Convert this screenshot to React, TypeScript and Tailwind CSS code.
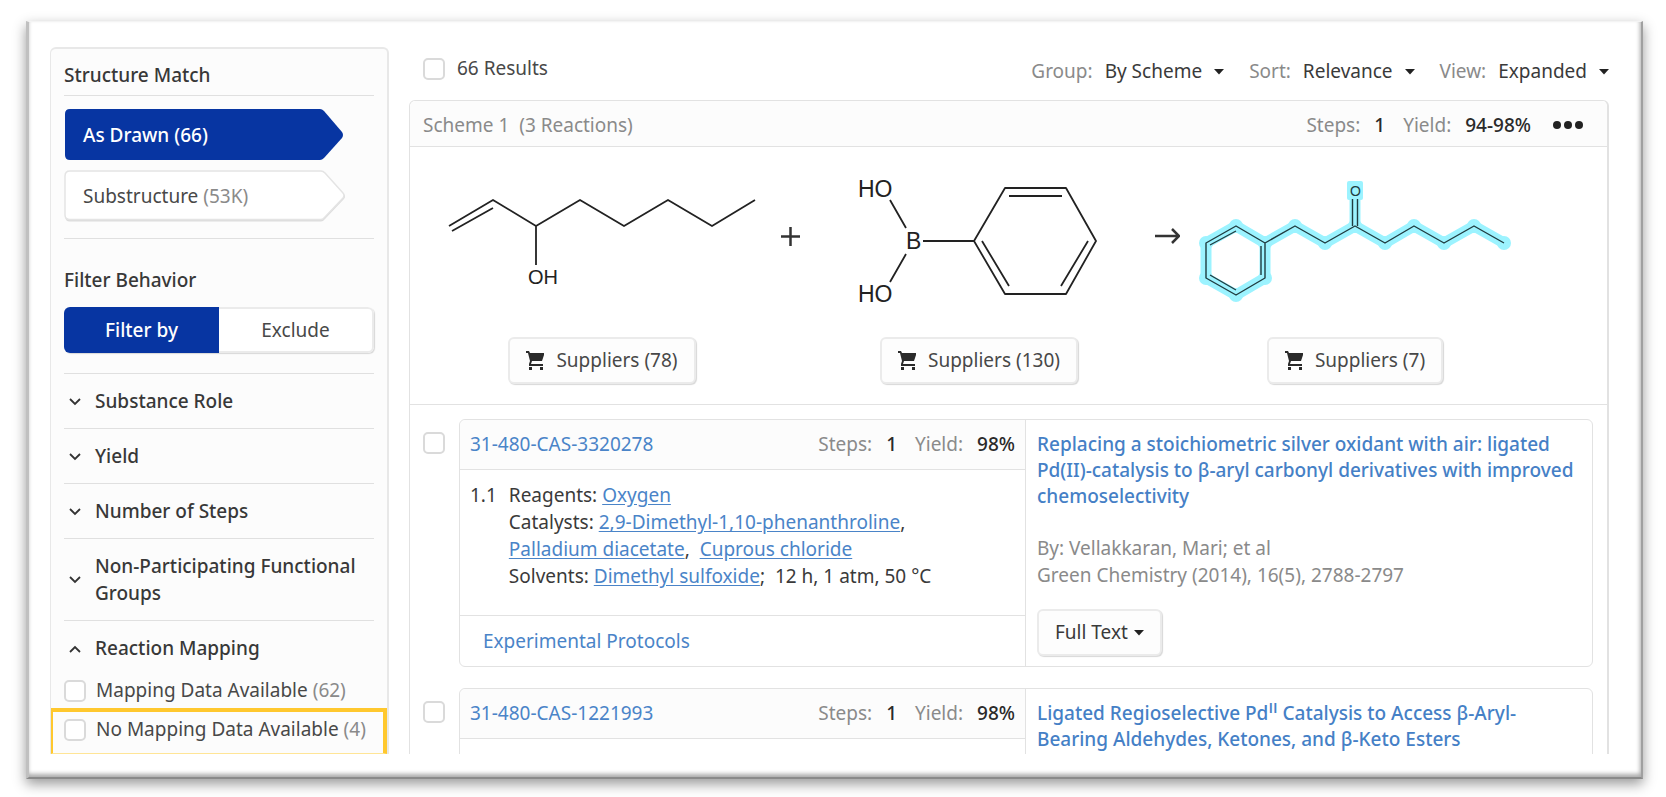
import { useState } from 'react'
import type { ReactNode } from 'react'

const cartPath =
  'M0 0h3l1 2h14v2l-2 6H6l-1 3h12v2H3v-2l1-3L2 2H0zM3 16h3v3H3zM14 16h3v3h-3z'

function Caret() {
  return (
    <svg width="10" height="6" viewBox="0 0 10 6" className="pointer-events-none shrink-0" aria-hidden="true">
      <path d="M0 0h10L5 5.5z" fill="#222" />
    </svg>
  )
}

function CheckBox({ id, label }: { id: string; label?: string }) {
  return (
    <input
      id={id}
      type="checkbox"
      aria-label={label}
      className="size-[22px] shrink-0 appearance-none rounded-[5px] border-2 border-[#dadada] bg-white checked:bg-[#0735a2]"
    />
  )
}

interface TagButtonProps {
  active: boolean
  label: string
  count: string
  onClick: () => void
}

// Button shaped like a tag with its point to the right
function TagButton({ active, label, count, onClick }: TagButtonProps) {
  return (
    <button type="button" onClick={onClick} className="relative flex h-[52px] w-[282px] items-center pl-[19px]">
      <svg width="282" height="52" viewBox="0 0 282 52" className="absolute inset-0" aria-hidden="true">
        {active ? (
          <path d="M6 0H256Q258 0 260 2L278 23Q280 26 278 29L260 49Q258 51 256 51H6Q1 51 1 46V5Q1 0 6 0Z" fill="#0735a2" />
        ) : (
          <>
            <path d="M6 2H257Q259 2 261 4L280 24Q282 26.500 280 29L261 49Q259 51.500 257 51.500H6Q1 51.500 1 46V7Q1 2 6 2Z" fill="#dcdcdc" />
            <path d="M6 1H257Q259 1 261 3L279 23Q281 25.500 279 28L261 47Q259 49.500 257 49.500H6Q1 49.500 1 45V6Q1 1 6 1Z" fill="#fff" stroke="#e4e4e4" strokeWidth="1.500" />
          </>
        )}
      </svg>
      <span className={active ? 'relative font-medium text-white' : 'relative text-[#484848]'}>
        {label} <span className={active ? 'text-white' : 'text-[#8a8a8a]'}>({count})</span>
      </span>
    </button>
  )
}

function Chevron({ up }: { up?: boolean }) {
  return (
    <svg width="12" height="12" viewBox="0 0 12 12" fill="none" stroke="#333" strokeWidth="1.800" className="shrink-0" aria-hidden="true">
      <path d={up ? 'M1 9l5-5 5 5' : 'M1 3l5 5 5-5'} />
    </svg>
  )
}

function Dropdown({ id, label, options }: { id: string; label: string; options: string[] }) {
  return (
    <div className="flex items-center gap-3">
      <label htmlFor={id} className="text-[#8a8a8a]">{label}:</label>
      <div className="relative flex items-center">
        <select id={id} className="field-sizing-content appearance-none bg-transparent pr-[22px] text-[#3a3a3a]">
          {options.map((option) => (
            <option key={option}>{option}</option>
          ))}
        </select>
        <span className="pointer-events-none absolute right-0">
          <Caret />
        </span>
      </div>
    </div>
  )
}

function Stats({ steps, yieldValue }: { steps: string; yieldValue: string }) {
  return (
    <dl className="flex items-center">
      <dt className="mr-[14px] text-[#8a8a8a]">Steps:</dt>
      <dd className="mr-[18px] font-medium text-[#2a2a2a]">{steps}</dd>
      <dt className="mr-[14px] text-[#8a8a8a]">Yield:</dt>
      <dd className="font-medium text-[#2a2a2a]">{yieldValue}</dd>
    </dl>
  )
}

function Suppliers({ count }: { count: number }) {
  return (
    <button
      type="button"
      className="flex h-[47px] items-center gap-[12px] rounded-[6px] border-2 border-[#ebebeb] bg-[#fdfdfd] px-[16px] text-[#484848] shadow-[1px_1px_1px_#d8d8d8]"
    >
      <svg width="18" height="19" viewBox="0 0 18 19" fill="#2a2a2a" aria-hidden="true">
        <path d={cartPath} />
      </svg>
      Suppliers ({count})
    </button>
  )
}

function Molecule({ children, label }: { children: ReactNode; label: string }) {
  return (
    <svg
      width="358"
      height="160"
      viewBox="0 0 358 160"
      fill="none"
      stroke="#222"
      strokeWidth="1.800"
      strokeLinejoin="round"
      className="font-['Liberation_Sans']"
      role="img"
      aria-label={label}
    >
      {children}
    </svg>
  )
}

function Octenol() {
  return (
    <Molecule label="1-Octen-3-ol">
      <path d="M26 59L70 33L113 59L157 33L201 59L245 33L289 59L332 33M29 64L70 41M113 59V98" />
      <text x="105" y="117" fontSize="20" fill="#222" stroke="none">OH</text>
    </Molecule>
  )
}

function BoronicAcid() {
  return (
    <Molecule label="Phenylboronic acid">
      <path d="M174 74L205 21H266L296 74L266 127H205ZM209 29H262M182 74L209 119M288 74L261 119M123 74H174M90 33L106 61M90 115L106 87" />
      <g fontSize="23" fill="#222" stroke="none">
        <text x="58" y="30">HO</text>
        <text x="106" y="82">B</text>
        <text x="58" y="135">HO</text>
      </g>
    </Molecule>
  )
}

const productAtoms = [
  [60, 59], [30, 76], [30, 111], [60, 128], [89, 111], [89, 76], [119, 59],
  [149, 76], [179, 59], [209, 76], [238, 59], [268, 76], [298, 59], [328, 76],
]

const productBonds =
  'M60 59L30 76V111L60 128L89 111V76ZM89 76L119 59L149 76L179 59L209 76L238 59L268 76L298 59L328 76'

function Ketone() {
  return (
    <Molecule label="1-Phenyl-3-octanone">
      <path d={productBonds} stroke="#9cf3ff" strokeWidth="11" />
      <path d="M179 59V25" stroke="#9cf3ff" strokeWidth="11" />
      <g fill="#9cf3ff" stroke="none">
        {productAtoms.map(([cx, cy]) => (
          <circle key={`${cx}-${cy}`} cx={cx} cy={cy} r="7" />
        ))}
        <rect x="171" y="14" width="16" height="19" rx="2" />
      </g>
      <g strokeWidth="1.400" stroke="#203c40">
        <path d={productBonds} />
        <path d="M34 78L60 64M34 108L60 123M85 79V108M176.500 59V32M181.500 59V32" />
      </g>
      <text x="174" y="29" fontSize="14" fill="#203c40" stroke="none">O</text>
    </Molecule>
  )
}

const filters = ['Substance Role', 'Yield', 'Number of Steps', 'Non-Participating Functional Groups']

function Sidebar() {
  const [match, setMatch] = useState('drawn')
  const [behavior, setBehavior] = useState('filter')

  return (
    <aside className="w-[339px] shrink-0 overflow-hidden rounded-t-[6px] border-t-2 border-r-2 border-l border-[#e8e8e8] bg-[#fcfcfc]">
      <div className="px-[13px]">
        <h2 className="border-b border-[#e0e0e0] pt-[13px] pb-[6px] font-medium text-[#383838]">Structure Match</h2>
        <div className="flex flex-col gap-[9px] border-b border-[#e0e0e0] pt-[13px] pb-[16px]">
          <TagButton active={match === 'drawn'} label="As Drawn" count="66" onClick={() => setMatch('drawn')} />
          <TagButton active={match === 'sub'} label="Substructure" count="53K" onClick={() => setMatch('sub')} />
        </div>
        <h2 className="pt-[28px] font-medium text-[#383838]">Filter Behavior</h2>
        <div className="mt-[13px] grid h-[46px] grid-cols-2 overflow-hidden rounded-[6px] shadow-[1px_1px_1px_#d8d8d8]">
          <button
            type="button"
            onClick={() => setBehavior('filter')}
            className={behavior === 'filter' ? 'bg-[#0735a2] font-medium text-white' : 'border-2 border-[#ebebeb] bg-white text-[#484848]'}
          >
            Filter by
          </button>
          <button
            type="button"
            onClick={() => setBehavior('exclude')}
            className={behavior === 'exclude' ? 'bg-[#0735a2] font-medium text-white' : 'rounded-r-[6px] border-2 border-l-0 border-[#ebebeb] bg-white text-[#484848]'}
          >
            Exclude
          </button>
        </div>
        <div className="mt-[20px]">
          {filters.map((name) => (
            <button
              key={name}
              type="button"
              className="flex w-full items-center gap-[14px] border-t border-[#e0e0e0] pt-[14px] pb-[13px] pl-[5px] text-left font-medium text-[#383838]"
            >
              <Chevron />
              {name}
            </button>
          ))}
          <button
            type="button"
            className="flex w-full items-center gap-[14px] border-t border-[#e0e0e0] pt-[14px] pb-[11px] pl-[5px] text-left font-medium text-[#383838]"
          >
            <Chevron up />
            Reaction Mapping
          </button>
        </div>
      </div>
      <div className="flex h-[35px] items-center gap-[10px] px-[13px] text-[#484848]">
        <CheckBox id="mapped" />
        <label htmlFor="mapped">
          Mapping Data Available <span className="text-[#8a8a8a]">(62)</span>
        </label>
      </div>
      <div className="flex h-[46px] items-center gap-[10px] border-t-4 border-r-4 border-b border-l-2 border-[#ffc82e] border-b-[#ffe596] pb-[6px] pl-[11px] text-[#484848]">
        <CheckBox id="unmapped" />
        <label htmlFor="unmapped">
          No Mapping Data Available <span className="text-[#8a8a8a]">(4)</span>
        </label>
      </div>
    </aside>
  )
}

function Substance({ children }: { children: ReactNode }) {
  return <a href="#substance" className="text-[#4a84c8] underline underline-offset-2">{children}</a>
}

interface ReactionProps {
  id: string
  title: ReactNode
  source?: string[]
  children?: ReactNode
}

function Reaction({ id, title, source, children }: ReactionProps) {
  return (
    <div className="flex gap-[14px] pr-[14px] pl-[13px]">
      <div className="pt-[13px]">
        <CheckBox id={id} label={`Select ${id}`} />
      </div>
      <article className="grid min-h-[248px] flex-1 grid-cols-2 rounded-[6px] border border-[#e2e2e2]">
        <div className="flex flex-col border-r border-[#e2e2e2]">
          <div className="flex h-[50px] items-center justify-between rounded-tl-[6px] border-b border-[#e2e2e2] bg-[#fcfcfc] px-[10px]">
            <a href="#reaction" className="text-[#4a84c8]">{id}</a>
            <Stats steps="1" yieldValue="98%" />
          </div>
          {children}
        </div>
        <div className="flex flex-col items-start px-[11px] pt-[11px]">
          <h3 className="leading-[26px] font-medium">
            <a href="#reference" className="text-[#4580c6]">{title}</a>
          </h3>
          {source && (
            <>
              <p className="mt-[26px] text-[#8a8a8a]">
                {source[0]}
                <br />
                {source[1]}
              </p>
              <button
                type="button"
                className="mt-[20px] flex h-[47px] items-center gap-[6px] rounded-[6px] border-2 border-[#ebebeb] bg-[#fdfdfd] px-[16px] text-[#3a3a3a] shadow-[1px_1px_1px_#d8d8d8]"
              >
                Full Text <Caret />
              </button>
            </>
          )}
        </div>
      </article>
    </div>
  )
}

export default function App() {
  return (
    <div className="h-screen overflow-hidden bg-white pt-[21px] pr-[23px] pb-[18px] pl-[26px] font-['Noto_Sans',sans-serif] text-[19px] leading-[27px]">
      <div className="h-full border-t border-r-2 border-b-2 border-l-3 border-t-[#f4f4f4] border-r-[#a0a0a0] border-b-[#8a8a8a] border-l-[#c0c0c0] pt-[25px] pr-[22px] pb-[23px] pl-[21px] shadow-[0_5px_12px_#999,inset_-1px_-3px_4px_#aaa]">
        <div className="flex h-full gap-[20px] overflow-hidden">
          <Sidebar />
          <main className="flex min-w-0 flex-1 flex-col pr-[10px]">
            <div className="flex h-[53px] shrink-0 items-start justify-between pl-[14px]">
              <div className="flex items-center gap-[12px] pt-[8px] text-[#484848]">
                <CheckBox id="all" />
                <label htmlFor="all">66 Results</label>
              </div>
              <div className="flex gap-[25px] pt-[11px]">
                <Dropdown id="group" label="Group" options={['By Scheme']} />
                <Dropdown id="sort" label="Sort" options={['Relevance']} />
                <Dropdown id="view" label="View" options={['Expanded']} />
              </div>
            </div>
            <section className="rounded-t-[6px] border border-r-2 border-b-0 border-[#e2e2e2]">
              <header className="flex h-[46px] items-center justify-between rounded-t-[6px] border-b border-[#e2e2e2] bg-[#fcfcfc] pt-[3px] pr-[24px] pl-[13px]">
                <h2 className="text-[#8a8a8a]">Scheme 1&nbsp; (3 Reactions)</h2>
                <div className="flex items-center gap-[22px]">
                  <Stats steps="1" yieldValue="94-98%" />
                  <button type="button" aria-label="More actions">
                    <svg width="30" height="8" viewBox="0 0 30 8" fill="#222" aria-hidden="true">
                      <circle cx="4" cy="4" r="4" />
                      <circle cx="15" cy="4" r="4" />
                      <circle cx="26" cy="4" r="4" />
                    </svg>
                  </button>
                </div>
              </header>
              <div className="flex h-[258px] border-b border-[#e2e2e2] pt-[20px] pl-[13px]">
                <div className="flex w-[358px] flex-col items-center gap-[10px]">
                  <Octenol />
                  <Suppliers count={78} />
                </div>
                <svg width="19" height="19" viewBox="0 0 19 19" stroke="#333" strokeWidth="2.500" className="mt-[60px]" aria-label="plus">
                  <path d="M0 9.500H19M9.500 0V19" />
                </svg>
                <div className="flex w-[358px] flex-col items-center gap-[10px]">
                  <BoronicAcid />
                  <Suppliers count={130} />
                </div>
                <svg width="26" height="16" viewBox="0 0 26 16" fill="none" stroke="#333" strokeWidth="2.500" className="-mx-1 mt-[61px]" aria-label="yields">
                  <path d="M1 8H25M18 1L25 8L18 15" />
                </svg>
                <div className="flex w-[358px] flex-col items-center gap-[10px]">
                  <Ketone />
                  <Suppliers count={7} />
                </div>
              </div>
              <div className="flex flex-col gap-[21px] pt-[14px]">
                <Reaction
                  id="31-480-CAS-3320278"
                  title="Replacing a stoichiometric silver oxidant with air: ligated Pd(II)-catalysis to β-aryl carbonyl derivatives with improved chemoselectivity"
                  source={['By: Vellakkaran, Mari; et al', 'Green Chemistry (2014), 16(5), 2788-2797']}
                >
                  <div className="flex flex-1 gap-[12px] px-[10px] pt-[12px] pb-[10px] text-[#3a3a3a]">
                    <span>1.1</span>
                    <div>
                      <p>Reagents: <Substance>Oxygen</Substance></p>
                      <p>
                        Catalysts: <Substance>2,9-Dimethyl-1,10-phenanthroline</Substance>,
                        <br />
                        <Substance>Palladium diacetate</Substance>,&nbsp; <Substance>Cuprous chloride</Substance>
                      </p>
                      <p>Solvents: <Substance>Dimethyl sulfoxide</Substance>;&nbsp; 12 h, 1 atm, 50 °C</p>
                    </div>
                  </div>
                  <div className="flex h-[51px] items-center border-t border-[#e2e2e2] pl-[23px]">
                    <a href="#protocols" className="text-[#4a84c8]">Experimental Protocols</a>
                  </div>
                </Reaction>
                <Reaction
                  id="31-480-CAS-1221993"
                  title={
                    <>
                      Ligated Regioselective Pd
                      <sup className="font-['Open_Sans'] text-[15px] font-semibold">II</sup> Catalysis to Access
                      β-Aryl-Bearing Aldehydes, Ketones, and β-Keto Esters
                    </>
                  }
                />
              </div>
            </section>
          </main>
        </div>
      </div>
    </div>
  )
}
